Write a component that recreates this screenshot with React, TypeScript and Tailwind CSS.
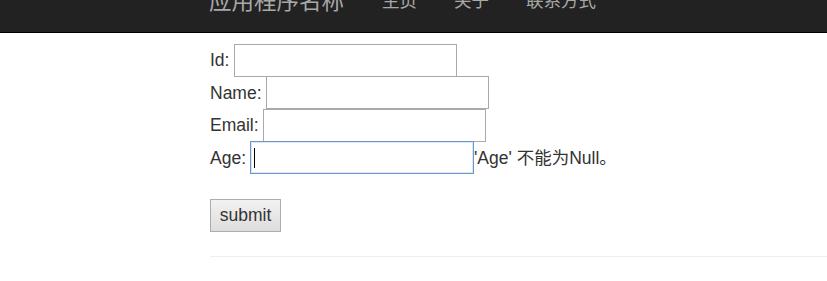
import React from 'react';

const font = { fontFamily: '"Liberation Sans", "Noto Sans CJK SC", sans-serif' };

const navLinks = ['主页', '关于', '联系方式'];

const Field: React.FC<{ label: string; gap?: string }> = ({ label, gap = 'mr-[4px]' }) => (
    <div className="flex h-[32.5px] items-center">
        <label className={gap}>{label}</label>
        <input
            type="text"
            className="h-[33px] w-[223px] border border-[#a9a9a9] bg-white outline-none"
        />
    </div>
);

export default function App() {
    return (
        <div className="min-h-[281px] bg-white text-[17.5px] text-[#333]" style={font}>
            <nav className="h-[33px] overflow-hidden border-b border-black bg-[#222]">
                <div className="-mt-[14px] flex items-end pl-[209px] text-[#a8a8a8]">
                    <span className="mr-[38px] translate-y-[3px] text-[22.5px] leading-[26px]">
                        应用程序名称
                    </span>
                    <div className="flex gap-[37px] text-[17.5px] leading-[22px]">
                        {navLinks.map((link) => (
                            <span key={link}>{link}</span>
                        ))}
                    </div>
                </div>
            </nav>

            <div className="pl-[210px]">
                <form className="pt-[11px]">
                    <Field label="Id:" gap="mr-[5px]" />
                    <Field label="Name:" />
                    <Field label="Email:" />
                    <div className="flex h-[32.5px] items-center">
                        <label className="mr-[4px]">Age:</label>
                        <div className="flex h-[33px] w-[224px] items-center border border-[#6f97c9] bg-white pl-[3px] shadow-[inset_0_0_0_1px_#dbe7f4]">
                            <span className="h-[20px] w-px bg-black" />
                        </div>
                        <span>'Age' 不能为Null。</span>
                    </div>
                    <div className="pt-[25px]">
                        <button
                            type="button"
                            className="h-[33px] w-[71px] border border-[#acacac] bg-gradient-to-b from-[#f2f2f2] to-[#dddddd] text-[17.5px] text-[#333]"
                        >
                            submit
                        </button>
                    </div>
                </form>
                <hr className="mt-[24px] border-t border-[#eeeeee]" />
            </div>
        </div>
    );
}
